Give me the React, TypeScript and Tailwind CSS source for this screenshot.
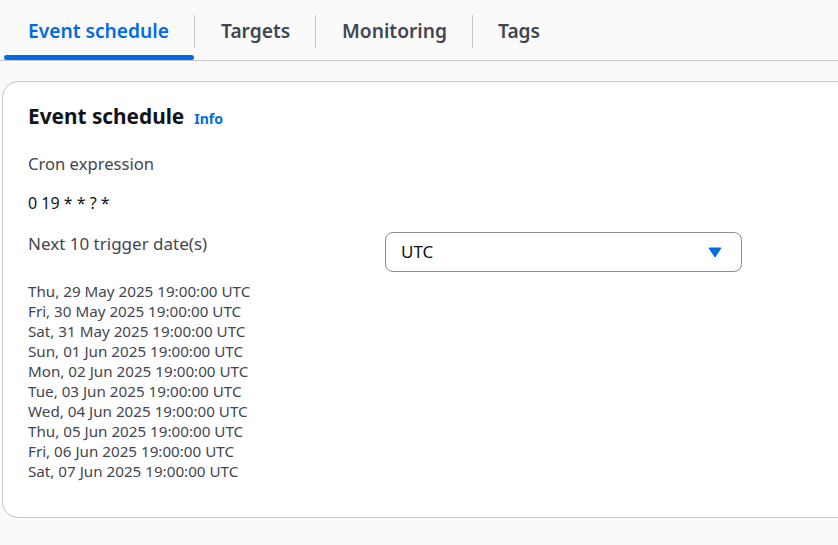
const tabs = [
  { label: 'Event schedule', active: true, width: 'w-[191px]', pad: 'pl-[24px]' },
  { label: 'Targets', active: false, width: 'w-[121px]', pad: 'pl-[26px]' },
  { label: 'Monitoring', active: false, width: 'w-[157px]', pad: 'pl-[26px]' },
  { label: 'Tags', active: false, width: 'w-[90px]', pad: 'pl-[25px]' },
];

const dates = [
  'Thu, 29 May 2025 19:00:00 UTC',
  'Fri, 30 May 2025 19:00:00 UTC',
  'Sat, 31 May 2025 19:00:00 UTC',
  'Sun, 01 Jun 2025 19:00:00 UTC',
  'Mon, 02 Jun 2025 19:00:00 UTC',
  'Tue, 03 Jun 2025 19:00:00 UTC',
  'Wed, 04 Jun 2025 19:00:00 UTC',
  'Thu, 05 Jun 2025 19:00:00 UTC',
  'Fri, 06 Jun 2025 19:00:00 UTC',
  'Sat, 07 Jun 2025 19:00:00 UTC',
];

export default function App() {
  return (
    <div className="h-[545px] w-[838px] overflow-hidden bg-[#fafafa] font-['Noto_Sans',sans-serif] text-[#0f141a]">
      <div className="flex h-[61px] border-b border-[#c6c6cd] pl-[4px] pt-[15px]">
        {tabs.map((tab, i) => (
          <div key={tab.label} className={`relative h-[45px] ${tab.width}`}>
            <div
              className={`flex h-[33px] items-center ${tab.pad} text-[19.2px] font-semibold ${
                tab.active ? 'text-[#006ce0]' : 'text-[#424650]'
              } ${i < tabs.length - 1 ? 'border-r border-[#c6c6cd]' : ''}`}
            >
              {tab.label}
            </div>
            {tab.active && <div className="absolute bottom-0 left-0 h-[5px] w-[190px] rounded-[3px] bg-[#006ce0]" />}
          </div>
        ))}
      </div>

      <div className="ml-[2px] mt-[20px] h-[437px] w-[860px] rounded-[16px] border border-[#c6c6cd] bg-white pl-[25px] pt-[19px]">
        <div className="flex h-[30px] items-center">
          <h2 className="text-[20.8px] font-bold leading-[30px]">Event schedule</h2>
          <a className="ml-[10px] mt-[4px] text-[14px] font-bold text-[#006ce0]">Info</a>
        </div>
        <div className="mt-[22px] text-[16.6px] leading-[22px] text-[#424650]">Cron expression</div>
        <div className="mt-[17px] text-[16px] leading-[22px]">0 19 * * ? *</div>
        <div className="mt-[19px] flex">
          <div className="w-[357px]">
            <div className="text-[17px] leading-[22px] text-[#424650]">Next 10 trigger date(s)</div>
            <div className="mt-[26px] text-[15.2px] leading-[20px] text-[#424650]">
              {dates.map((d) => (
                <div key={d}>{d}</div>
              ))}
            </div>
          </div>
          <div className="mt-[-1px] flex h-[40px] w-[357px] items-center justify-between rounded-[8px] border border-[#8c8c94] pl-[15px] pr-[19px] text-[17px]">
            <span>UTC</span>
            <svg width="14" height="11" viewBox="0 0 14 11" aria-hidden="true">
              <path d="M1 1h12L7 10z" fill="#006ce0" stroke="#006ce0" strokeWidth="1" strokeLinejoin="round" />
            </svg>
          </div>
        </div>
      </div>
    </div>
  );
}
